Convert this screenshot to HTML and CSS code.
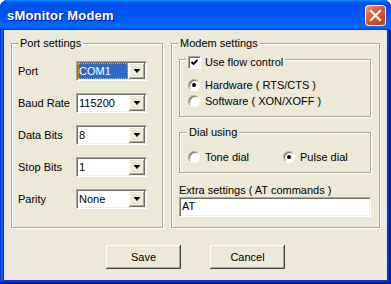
FILE: index.html
```html
<!DOCTYPE html>
<html lang="en">
<head>
    <meta charset="UTF-8">
    <meta name="viewport" content="width=device-width, initial-scale=1.0">
    <title>sMonitor Modem</title>
    <link rel="stylesheet" href="styles.css">
</head>
<body>
    <div class="window">
        <div class="titlebar">
            <span class="title">sMonitor Modem</span>
            <button class="close-button" aria-label="Close">
                <svg width="21" height="21" viewBox="0 0 21 21">
                    <defs>
                        <linearGradient id="closeFill" x1="0" y1="0" x2="1" y2="1">
                            <stop offset="0" stop-color="#f0a68a"/>
                            <stop offset="0.35" stop-color="#e2603a"/>
                            <stop offset="1" stop-color="#c4360f"/>
                        </linearGradient>
                    </defs>
                    <rect x="0.5" y="0.5" width="20" height="20" rx="3" fill="url(#closeFill)" stroke="#fff"/>
                    <path d="M6 6 L15 15 M15 6 L6 15" stroke="#fff" stroke-width="2.2" stroke-linecap="square"/>
                </svg>
            </button>
        </div>

        <div class="client">
            <div class="groups">
                <div class="group port-group">
                    <div class="group-title">Port settings</div>
                    <div class="fields">
                        <label>Port</label>
                        <div class="combo">
                            <span class="combo-value selected">COM1</span>
                            <span class="combo-button"></span>
                        </div>

                        <label>Baud Rate</label>
                        <div class="combo">
                            <span class="combo-value">115200</span>
                            <span class="combo-button"></span>
                        </div>

                        <label>Data Bits</label>
                        <div class="combo">
                            <span class="combo-value">8</span>
                            <span class="combo-button"></span>
                        </div>

                        <label>Stop Bits</label>
                        <div class="combo">
                            <span class="combo-value">1</span>
                            <span class="combo-button"></span>
                        </div>

                        <label>Parity</label>
                        <div class="combo">
                            <span class="combo-value">None</span>
                            <span class="combo-button"></span>
                        </div>
                    </div>
                </div>

                <div class="group modem-group">
                    <div class="group-title">Modem settings</div>

                    <div class="group flow-group">
                        <div class="group-title check-title">
                            <span class="checkbox">
                                <svg width="9" height="9" viewBox="0 0 9 9">
                                    <path d="M1.5 4 L3.5 6 L7.5 2" fill="none" stroke="#000" stroke-width="1.8"/>
                                </svg>
                            </span>
                            Use flow control
                        </div>
                        <div class="option"><span class="radio on"></span>Hardware ( RTS/CTS )</div>
                        <div class="option"><span class="radio"></span>Software ( XON/XOFF )</div>
                    </div>

                    <div class="group dial-group">
                        <div class="group-title">Dial using</div>
                        <div class="dial-options">
                            <div class="option"><span class="radio"></span>Tone dial</div>
                            <div class="option"><span class="radio on"></span>Pulse dial</div>
                        </div>
                    </div>

                    <div class="extra-label">Extra settings ( AT commands )</div>
                    <div class="textbox">AT</div>
                </div>
            </div>

            <div class="buttons">
                <button class="push-button">Save</button>
                <button class="push-button">Cancel</button>
            </div>
        </div>
    </div>
</body>
</html>
```

FILE: styles.css
```css
body {
    margin: 0;
    width: 391px;
    height: 284px;
    overflow: hidden;
    background-color: #ffffff;
    font-family: "Liberation Sans", Arial, sans-serif;
    font-size: 11px;
    color: #000000;
}

.window {
    width: 391px;
    height: 284px;
    box-sizing: border-box;
    padding: 0 4px 4px;
    display: flex;
    flex-direction: column;
    background-color: #0831d9;
    border-radius: 8px 8px 0 0;
    box-shadow: inset -1px -1px #00138c, inset 1px 1px #0831d9,
                inset -2px -2px #001ea0, inset 2px 2px #166aee,
                inset -3px -3px #003bda, inset 3px 3px #0855dd;
}

/* Title bar */
.titlebar {
    height: 30px;
    margin: 0 -4px;
    padding: 0 5px 0 7px;
    display: flex;
    align-items: center;
    justify-content: space-between;
    border-radius: 8px 8px 0 0;
    background: linear-gradient(180deg, #0997ff 0%, #0053ee 8%, #0050ee 40%,
                #0066ff 88%, #0066ff 93%, #005bff 95%, #003dd7 96%, #003dd7 100%);
}

.title {
    color: #ffffff;
    font-size: 13px;
    font-weight: bold;
    letter-spacing: 0.2px;
    text-shadow: 1px 1px #0f1089;
}

.close-button {
    width: 21px;
    height: 21px;
    padding: 0;
    border: none;
    background: none;
    display: block;
}

.close-button svg {
    display: block;
}

/* Client area */
.client {
    flex: 1;
    padding: 13px 7px 0;
    background-color: #ece9d8;
}

.groups {
    display: flex;
    gap: 8px;
    height: 185px;
}

.group {
    box-sizing: border-box;
    display: flex;
    flex-direction: column;
    border: 1px solid #aca899;
    box-shadow: inset 1px 1px #ffffff, 1px 1px #ffffff;
}

.group-title {
    align-self: flex-start;
    padding: 0 2px;
    line-height: 13px;
    background-color: #ece9d8;
}

.port-group {
    width: 152px;
    padding: 0 6px;
}

.port-group .group-title {
    margin: -7px 0 11px;
}

.fields {
    display: grid;
    grid-template-columns: 58px 71px;
    grid-auto-rows: 20px;
    row-gap: 12px;
    align-items: center;
}

/* Combo boxes */
.combo {
    box-sizing: border-box;
    height: 20px;
    padding: 1px;
    display: flex;
    background-color: #ffffff;
    border: 1px solid;
    border-color: #aca899 #ffffff #ffffff #aca899;
    box-shadow: inset 1px 1px #716f64, inset -1px -1px #f1efe2;
}

.combo-value {
    flex: 1;
    padding-left: 1px;
    line-height: 16px;
}

.combo-value.selected {
    margin-right: 1px;
    padding-left: 0;
    line-height: 14px;
    color: #ffffff;
    background-color: #316ac5;
    border: 1px dotted #e8b030;
}

.combo-button {
    width: 16px;
    height: 16px;
    display: flex;
    align-items: center;
    justify-content: center;
    background-color: #ece9d8;
    box-shadow: inset -1px -1px #716f64, inset 1px 1px #ffffff, inset -2px -2px #aca899;
}

.combo-button::after {
    content: '';
    width: 7px;
    height: 4px;
    background-color: #000000;
    clip-path: polygon(0 0, 100% 0, 50% 100%);
}

/* Modem settings */
.modem-group {
    flex: 1;
    padding: 0 7px;
}

.modem-group > .group-title {
    margin: -7px 0 9px -1px;
}

.flow-group {
    margin-right: 1px;
    padding: 0 8px 7px;
}

.check-title {
    margin: -4px 0 8px -2px;
    display: flex;
    align-items: center;
    gap: 4px;
}

.checkbox {
    width: 13px;
    height: 13px;
    box-sizing: border-box;
    display: flex;
    align-items: center;
    justify-content: center;
    background-color: #ffffff;
    border: 1px solid;
    border-color: #aca899 #ffffff #ffffff #aca899;
    box-shadow: inset 1px 1px #716f64;
}

.option {
    height: 16px;
    display: flex;
    align-items: center;
    gap: 5px;
    white-space: nowrap;
}

.radio {
    flex: none;
    width: 12px;
    height: 12px;
    box-sizing: border-box;
    display: flex;
    align-items: center;
    justify-content: center;
    border-radius: 50%;
    background-color: #ffffff;
    border: 1px solid;
    border-color: #aca899 #ffffff #ffffff #aca899;
    box-shadow: inset 1px 1px #716f64;
}

.radio.on::after {
    content: '';
    width: 4px;
    height: 4px;
    border-radius: 50%;
    background-color: #000000;
}

.dial-group {
    margin: 15px 1px 0 0;
    padding: 0 8px 7px;
}

.dial-group .group-title {
    margin: -7px 0 10px -1px;
}

.dial-options {
    display: grid;
    grid-template-columns: 95px auto;
}

.extra-label {
    margin-top: 11px;
    line-height: 13px;
}

.textbox {
    box-sizing: border-box;
    height: 20px;
    margin-right: 1px;
    padding-left: 2px;
    line-height: 16px;
    background-color: #ffffff;
    border: 1px solid;
    border-color: #aca899 #ffffff #ffffff #aca899;
    box-shadow: inset 1px 1px #716f64, inset -1px -1px #f1efe2;
}

/* Buttons */
.buttons {
    margin-top: 17px;
    display: flex;
    justify-content: center;
    gap: 29px;
}

.push-button {
    width: 75px;
    height: 24px;
    padding: 0;
    border: none;
    font-family: inherit;
    font-size: 11px;
    color: #000000;
    background-color: #ece9d8;
    box-shadow: inset -1px -1px #404040, inset 1px 1px #ffffff, inset -2px -2px #aca899;
}
```
